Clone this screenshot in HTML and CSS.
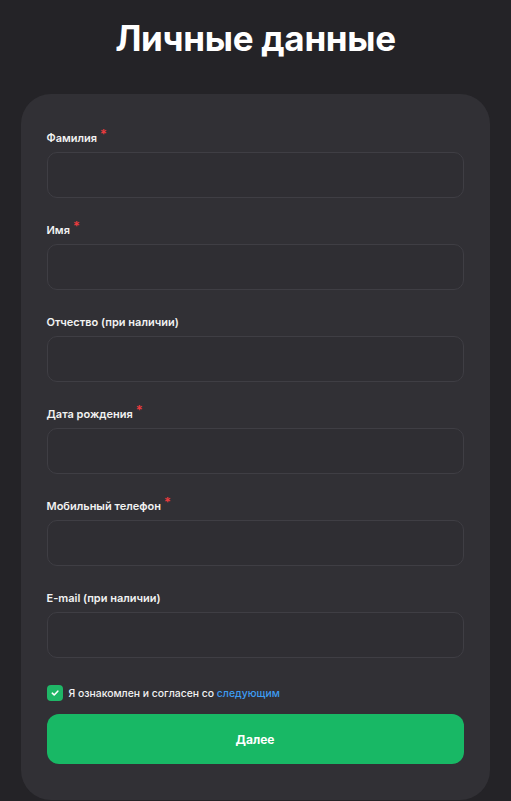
FILE: index.html
```html
<!DOCTYPE html>
<html lang="ru">
<head>
<meta charset="utf-8">
<title>Личные данные</title>
<link rel="stylesheet" href="styles.css">
</head>
<body>
<main class="page">
  <h1 class="title">Личные данные</h1>
  <form class="card">
    <div class="field">
      <label class="label">Фамилия<span class="req">*</span></label>
      <div class="input"></div>
    </div>
    <div class="field">
      <label class="label">Имя<span class="req">*</span></label>
      <div class="input"></div>
    </div>
    <div class="field">
      <label class="label">Отчество (при наличии)</label>
      <div class="input"></div>
    </div>
    <div class="field">
      <label class="label">Дата рождения<span class="req">*</span></label>
      <div class="input"></div>
    </div>
    <div class="field">
      <label class="label">Мобильный телефон<span class="req">*</span></label>
      <div class="input"></div>
    </div>
    <div class="field">
      <label class="label">E-mail (при наличии)</label>
      <div class="input"></div>
    </div>
    <div class="agree">
      <span class="check"><svg width="10" height="10" viewBox="0 0 10 10"><path d="M2.3 5.2 L4.2 7 L7.8 3.2" fill="none" stroke="#fff" stroke-width="1.6" stroke-linecap="round" stroke-linejoin="round"/></svg></span>
      <span class="agree-text">Я ознакомлен и согласен со <a class="link" href="#">следующим</a></span>
    </div>
    <button type="button" class="btn">Далее</button>
  </form>
</main>
</body>
</html>
```
FILE: styles.css
```css
* { box-sizing: border-box; }
html, body { margin: 0; padding: 0; }
body {
  background: #242327;
  font-family: Inter, "Noto Sans", sans-serif;
  color: #fff;
  width: 511px;
  height: 801px;
  overflow: hidden;
}
.page {
  display: flex;
  flex-direction: column;
  align-items: center;
}
.title {
  margin: 16px 0 0;
  height: 78px;
  font-size: 35px;
  font-weight: 700;
  letter-spacing: -0.3px;
  line-height: 44px;
  text-align: center;
}
.card {
  width: 469px;
  margin-right: 1px;
  background: #313035;
  border-radius: 30px;
  padding: 37px 26px 36px;
  display: flex;
  flex-direction: column;
}
.field {
  display: flex;
  flex-direction: column;
  gap: 7px;
  margin-bottom: 25px;
}
.field:nth-child(6) { margin-bottom: 27px; }
.label {
  font-size: 11px;
  font-weight: 600;
  line-height: 14px;
  height: 14px;
  color: #f2f2f2;
  display: flex;
}
.req {
  color: #ec3b3e;
  font-size: 13px;
  line-height: 10px;
  margin-left: 3px;
  margin-top: -2px;
}
.input {
  height: 46px;
  border: 1px solid #3f3e44;
  border-radius: 10px;
  background: #2f2e33;
}
.agree {
  display: flex;
  align-items: center;
  gap: 6px;
  height: 16px;
  margin-bottom: 13px;
}
.check {
  width: 16px;
  height: 16px;
  border-radius: 4px;
  background: #1fb767;
  display: flex;
  align-items: center;
  justify-content: center;
}
.agree-text {
  font-size: 10.4px;
  font-weight: 500;
  color: #f2f2f2;
}
.link { color: #3d9cf2; text-decoration: none; }
.btn {
  height: 50px;
  border: 0;
  border-radius: 12px;
  background: #18b865;
  color: #fff;
  font-family: Inter, "Noto Sans", sans-serif;
  font-size: 12px;
  font-weight: 700;
}
```
